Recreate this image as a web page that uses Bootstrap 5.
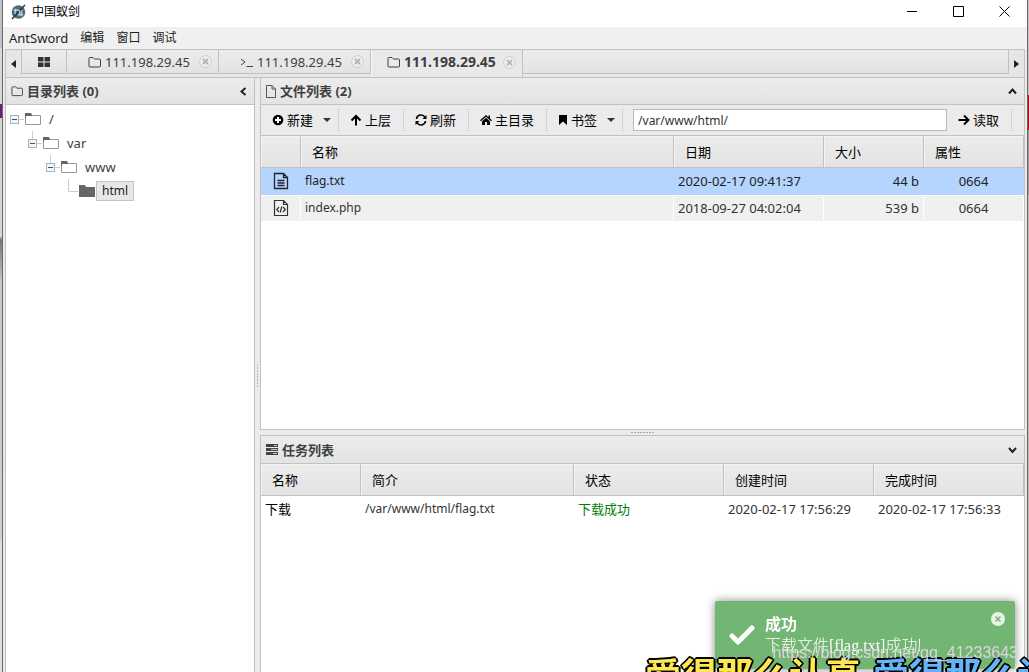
<!DOCTYPE html>
<html lang="zh-CN">
<head>
<meta charset="utf-8">
<meta name="viewport" content="width=device-width, initial-scale=1">
<title>中国蚁剑</title>
<link rel="stylesheet" href="https://cdn.jsdelivr.net/npm/bootstrap@5.3.0/dist/css/bootstrap.min.css">
<style>
:root { --edge: #c1c1c1; --face: linear-gradient(#ececec, #e3e3e3); }
body { font-family: "Noto Sans", "Noto Sans CJK SC", sans-serif; font-size: 13px; line-height: 20px; color: #404040; background: #ebebeb; }
svg { display: block; flex: none; }
button { border: 0; padding: 0; background: none; color: inherit; font: inherit; }
.strip-l { width: 3px; background: linear-gradient(#bfc4c8 0 48px, #d8d8d8 48px 104px, #68216a 104px 118px, #d6d6d6 118px 236px, #777 240px, #c9c9c9 283px, #cfcfcf 540px, #dedede 541px); border-right: 1px solid #686868; }
.strip-r { width: 2px; background: linear-gradient(#c8c4be 0 95px, #b3001b 95px 130px, #9c9690 130px 195px, #c5bdb5 195px); border-left: 1px solid #666; }
.title-row { height: 27px; background: #fff; color: #000; font-size: 12px; padding: 0 0 4px 8px; gap: 6px; }
.win-btns { width: 138px; }
.menu-row { height: 22px; background: #f0f0f0; padding-left: 6px; gap: 12px; font-size: 12px; }
.menu-row a { color: #222; text-decoration: none; }
.menu-row a:first-child { font-size: 13px; }
.shell { padding: 0 2px; }
.tabs-row { height: 29px; border: 1px solid var(--edge); background: #e6e6e6; }
.tabs-row > button { width: 15px; color: #222; }
.tab-list { height: 24px; border: 1px solid var(--edge); border-top: 0; background: var(--face); }
.tab-cell { width: 152px; border-right: 1px solid var(--edge); padding: 0 6px 0 21px; gap: 4px; }
.tab-home { width: 45px; border-right: 1px solid var(--edge); }
.tab-cell.active { height: 27px; background: #e9e9e9; font-size: 14px; font-weight: 700; padding: 0 6px 3px 15px; border-left: 1px solid #f8f8f8; }
.close-dot { margin-left: auto; color: #bbb; }
.tree-pane { width: 250px; background: #fff; border: 1px solid var(--edge); border-top: 0; border-bottom: 0; }
.pane-head { height: 27px; background: var(--face); border-bottom: 1px solid var(--edge); padding: 0 7px 0 5px; gap: 4px; font-weight: 700; }
.pane-head button { margin-left: auto; color: #222; }
.split-v { width: 5px; }
.split-v i { width: 1px; height: 23px; background: repeating-linear-gradient(#bbb 0 2px, transparent 2px 3px); }
.split-h { height: 5px; }
.split-h i { width: 23px; height: 1px; background: repeating-linear-gradient(90deg, #aaa 0 2px, transparent 2px 3px); }
.files-pane { height: 352px; background: #fff; border: 1px solid var(--edge); border-top: 0; }
.tasks-pane { background: #fff; border: 1px solid var(--edge); border-bottom: 0; }
.tasks-pane .pane-head { height: 28px; }
.tree { padding: 2px 4px; margin: 0; }
.tree ul { padding-left: 18px; margin: 0; }
.tree-item { height: 24px; }
.tree-item span { padding: 0 5px; margin-left: 2px; line-height: 18px; border: 1px solid transparent; }
.tree-item .picked { margin-left: 1px; background: #e7e7e7; border-color: #c3c3c3; color: #222; }
.tool-row { height: 31px; background: #ebebeb; border-bottom: 1px solid var(--edge); color: #000; }
.tool-row button { display: flex; align-items: center; gap: 3px; padding: 0 12px 0 11px; height: 22px; border-right: 1px solid #c5d7dc; white-space: nowrap; }
.tool-row .tool-menu { padding-right: 7px; }
.caret-dn { margin-left: 7px; border: 4px solid transparent; border-top-color: #333; border-bottom: 0; }
.path-box { height: 22px; margin: 0 0 0 10px; min-width: 0; padding: 0 4px; border: 1px solid #bbb; border-radius: 0; font: inherit; font-size: 12px; color: #333; }
.file-name { font-size: 12px; }
.grid-tbl { width: 100%; table-layout: fixed; border-collapse: separate; border-spacing: 0; color: #333; }
.grid-tbl th { height: 32px; padding: 0 11px; font-weight: 400; color: #000; background: var(--face); border: 1px solid var(--edge); border-width: 0 1px 1px 0; box-shadow: inset 1px 1px #f4f4f4; }
.grid-tbl td { height: 27px; padding: 0 4px; white-space: nowrap; border-bottom: 1px solid #fff; }
.file-tbl td { border-right: 1px solid #f8f8f8; padding-bottom: 2px; }
.file-tbl tr.alt td { background: #f0f0f0; border-right-color: #fff; height: 26px; }
.file-tbl tr.picked td { background: #b5d5ff; border-right-color: #b5d5ff; color: #222; height: 28px; }
.w-ico { width: 40px; } .w-100c { width: 100px; } .w-150c { width: 150px; }
.ok-text { color: #008000; }
.note { right: 14px; bottom: 3px; width: 300px; height: 68px; background: #73b573; border-radius: 2px; box-shadow: 0 0 10px #888; color: #fff; padding: 11px 10px 0 14px; gap: 10px; line-height: 20px; font-size: 16px; }
.note b { font-family: "Liberation Serif", "Noto Sans CJK SC", serif; }
.note-body { padding-top: 2px; }
.note-msg { font-weight: 300; white-space: nowrap; }
.lyric { left: 645px; top: 650px; right: 0; height: 22px; overflow: hidden; white-space: nowrap; font: 700 36px/46px "Noto Sans CJK SC", sans-serif; gap: 12px; pointer-events: none; text-shadow: 2px 0 #000, -2px 0 #000, 0 2px #000, 0 -2px #000, 1px 1px #000, -1px -1px #000, 1px -1px #000, -1px 1px #000; }
.sung { color: #ffe84d; } .next { color: #63b4fb; }
.stamp { right: 11px; bottom: 9px; font: 16px/20px "Liberation Sans", sans-serif; color: #e3e3e3; opacity: .85; text-shadow: 0 0 1px #999; }
</style>
</head>
<body class="vh-100 overflow-hidden d-flex">
<svg width="0" height="0" class="position-absolute">
  <symbol id="folder-line" viewBox="0 0 13 12"><path d="M1 2.500q0-1 1-1h3l1.500 1.500h5q1 0 1 1v6q0 1-1 1H2q-1 0-1-1z" fill="none" stroke="currentColor"/></symbol>
  <symbol id="folder-open" viewBox="0 0 16 14"><path d="M.5 3.500h15v9H.5z" fill="#fff" stroke="#999"/><path d="M0 1h6l1 2v1H1v2H0z" fill="#666"/></symbol>
  <symbol id="minus-box" viewBox="0 0 9 9"><rect x=".5" y=".5" width="8" height="8" fill="#f0f6fa" stroke="#9fb5c0"/><path d="M2 4.500h5" stroke="#456"/></symbol>
  <symbol id="close-ring" viewBox="0 0 13 13"><circle cx="6.500" cy="6.500" r="5.900" fill="#eee" stroke="#ccc"/><path d="M4 4l5 5M9 4l-5 5" stroke="#b5b5b5" stroke-width="1.800"/></symbol>
</svg>
<div class="strip-l flex-shrink-0"></div>
<div class="flex-grow-1 d-flex flex-column overflow-hidden">
  <header>
    <div class="title-row d-flex align-items-center">
      <svg width="15" height="16" viewBox="0 0 15 16"><circle cx="7.500" cy="8" r="6.800" fill="#4d6a78"/><path d="M1 15L14 1" stroke="#273e49" stroke-width="1.500"/><path d="M4 10q0-5 3-4t1 5M7 11q4 1 4-5M3 7l2-2M10 12l2-2" fill="none" stroke="#c7d8df" stroke-width="1.200"/></svg>
      <span>中国蚁剑</span>
      <div class="win-btns d-flex ms-auto">
        <button class="flex-fill" aria-label="最小化"><svg class="m-auto" width="11" height="11"><path d="M0 5.500h10" stroke="#000"/></svg></button>
        <button class="flex-fill" aria-label="最大化"><svg class="m-auto" width="11" height="11"><path d="M.5.5h10v10H.5z" fill="none" stroke="#000"/></svg></button>
        <button class="flex-fill" aria-label="关闭"><svg class="m-auto" width="11" height="11"><path d="M.5.5l10 10M10.500.5l-10 10" stroke="#000"/></svg></button>
      </div>
    </div>
    <nav class="menu-row d-flex align-items-center"><a href="#">AntSword</a><a href="#">编辑</a><a href="#">窗口</a><a href="#">调试</a></nav>
  </header>
  <div class="shell flex-grow-1 d-flex flex-column overflow-hidden">
    <div class="tabs-row d-flex">
      <button aria-label="向左"><svg class="m-auto" width="5" height="8"><path d="M5 0v8L0 4z" fill="currentColor"/></svg></button>
      <div class="tab-list flex-grow-1 d-flex">
        <button class="tab-home" aria-label="主页"><svg class="m-auto" width="12" height="10" viewBox="0 0 12 10"><path d="M0 0h5.500v4.500H0zM6.500 0H12v4.500H6.500zM0 5.500h5.500V10H0zM6.500 5.500H12V10H6.500z" fill="#333"/></svg></button>
        <button class="tab-cell d-flex align-items-center"><svg width="13" height="12"><use href="#folder-line"/></svg>111.198.29.45<svg class="close-dot" width="13" height="13"><use href="#close-ring"/></svg></button>
        <button class="tab-cell d-flex align-items-center"><svg width="13" height="12"><path d="M1 3l4 3-4 3M6.500 10.500H13" fill="none" stroke="#444"/></svg>111.198.29.45<svg class="close-dot" width="13" height="13"><use href="#close-ring"/></svg></button>
        <button class="tab-cell active d-flex align-items-center"><svg width="13" height="12"><use href="#folder-line"/></svg>111.198.29.45<svg class="close-dot" width="13" height="13"><use href="#close-ring"/></svg></button>
      </div>
      <button aria-label="向右"><svg class="m-auto" width="5" height="8"><path d="M0 0v8l5-4z" fill="currentColor"/></svg></button>
    </div>
    <main class="flex-grow-1 d-flex overflow-hidden">
      <aside class="tree-pane flex-shrink-0">
        <div class="pane-head d-flex align-items-center"><svg width="12" height="12"><use href="#folder-line"/></svg>目录列表 (0)<button aria-label="收起"><svg width="8" height="9"><path d="M6.500 1L2.500 4.500l4 3.500" fill="none" stroke="currentColor" stroke-width="2"/></svg></button></div>
        <ul class="tree list-unstyled">
          <li><div class="tree-item d-flex align-items-center"><svg width="15" height="24"><use href="#minus-box" y="8" width="9" height="9"/><path d="M9 12.500h5" stroke="#ccc"/></svg><svg width="16" height="14"><use href="#folder-open"/></svg><span>/</span></div>
            <ul class="list-unstyled"><li><div class="tree-item d-flex align-items-center"><svg width="15" height="24"><path d="M4.500 0v8M9 12.500h5" stroke="#ccc"/><use href="#minus-box" y="8" width="9" height="9"/></svg><svg width="16" height="14"><use href="#folder-open"/></svg><span>var</span></div>
              <ul class="list-unstyled"><li><div class="tree-item d-flex align-items-center"><svg width="15" height="24"><path d="M4.500 0v8M9 12.500h5" stroke="#ccc"/><use href="#minus-box" y="8" width="9" height="9"/></svg><svg width="16" height="14"><use href="#folder-open"/></svg><span>www</span></div>
                <ul class="list-unstyled"><li><div class="tree-item d-flex align-items-center"><svg width="15" height="24"><path d="M4.500 0v12.500H14" fill="none" stroke="#ccc"/></svg><svg width="16" height="14"><path d="M0 1h6l1 2h9v10H0z" fill="#666"/></svg><span class="picked file-name">html</span></div></li></ul>
              </li></ul>
            </li></ul>
          </li>
        </ul>
      </aside>
      <div class="split-v flex-shrink-0 d-flex align-items-center justify-content-center"><i></i></div>
      <div class="flex-grow-1 d-flex flex-column overflow-hidden">
        <section class="files-pane flex-shrink-0">
          <div class="pane-head d-flex align-items-center"><svg width="10" height="13"><path d="M.5.5h5.500l3.500 3.500v8.500h-9zM6 .5V4h3.500" fill="none" stroke="#555"/></svg>文件列表 (2)<button aria-label="收起"><svg width="9" height="8"><path d="M1 6.500l3.500-4 3.500 4" fill="none" stroke="currentColor" stroke-width="2"/></svg></button></div>
          <div class="tool-row d-flex align-items-center">
            <button class="tool-menu"><svg width="12" height="12"><circle cx="6" cy="6" r="5.300"/><path d="M6 3v6M3 6h6" stroke="#fff" stroke-width="2"/></svg>新建<i class="caret-dn"></i></button>
            <button><svg width="12" height="12"><path d="M6 11.500V2M1.500 6.500L6 2l4.500 4.500" fill="none" stroke="#000" stroke-width="2"/></svg>上层</button>
            <button><svg width="12" height="12"><path d="M1.500 5A4.500 4.500 0 0 1 10 3.500M10.500 7A4.500 4.500 0 0 1 2 8.500" fill="none" stroke="#000" stroke-width="1.600"/><path d="M11.500 1v4h-4zM.5 11V7h4z"/></svg>刷新</button>
            <button><svg width="12" height="12"><path d="M6 1L0 6.300l.8.9L6 2.700l5.200 4.500.8-.9-2-1.800V1.500H8.500v1.700zM6 3.800L2 7.200V11h3V8h2v3h3V7.200z"/></svg>主目录</button>
            <button class="tool-menu"><svg width="10" height="12"><path d="M1 1h8v10L5 7.500 1 11z"/></svg>书签<i class="caret-dn"></i></button>
            <input class="path-box flex-grow-1" type="text" aria-label="路径" value="/var/www/html/">
            <button><svg width="12" height="12"><path d="M.5 6H10M6 1.500L10.500 6 6 10.500" fill="none" stroke="#000" stroke-width="2"/></svg>读取</button>
            <span class="ps-2 pe-1"></span>
          </div>
          <table class="grid-tbl file-tbl">
            <colgroup><col class="w-ico"><col><col class="w-150c"><col class="w-100c"><col class="w-100c"></colgroup>
            <thead><tr><th></th><th>名称</th><th>日期</th><th>大小</th><th>属性</th></tr></thead>
            <tbody>
              <tr class="picked"><td><svg class="m-auto" width="16" height="18"><path d="M1.500 1.500h9l4 4v11h-13zM10.500 1.500v4h4M4.500 8.500h7M4.500 11h7M4.500 13.500h7" fill="none" stroke="#223" stroke-width="1.300"/></svg></td><td class="file-name">flag.txt</td><td>2020-02-17 09:41:37</td><td class="text-end">44 b</td><td class="text-center">0664</td></tr>
              <tr class="alt"><td><svg class="m-auto" width="16" height="18"><path d="M1.500 1.500h9l4 4v11h-13zM10.500 1.500v4h4M6 8L3.700 10.500 6 13M10 8l2.300 2.500L10 13M8.700 7.500l-1.400 6" fill="none" stroke="#333" stroke-width="1.200"/></svg></td><td class="file-name">index.php</td><td>2018-09-27 04:02:04</td><td class="text-end">539 b</td><td class="text-center">0664</td></tr>
            </tbody>
          </table>
        </section>
        <div class="split-h flex-shrink-0 d-flex align-items-center justify-content-center"><i></i></div>
        <section class="tasks-pane flex-grow-1">
          <div class="pane-head d-flex align-items-center"><svg width="12" height="11"><path d="M0 0h12v3H0zM0 4h12v3H0zM0 8h12v3H0z" fill="#444"/><path d="M8 1.500h3M5 5.500h6M7 9.500h4" stroke="#ccc"/></svg>任务列表<button aria-label="展开"><svg width="9" height="8"><path d="M1 2l3.500 4L8 2" fill="none" stroke="currentColor" stroke-width="2"/></svg></button></div>
          <table class="grid-tbl">
            <colgroup><col class="w-100c"><col><col class="w-150c"><col class="w-150c"><col class="w-150c"></colgroup>
            <thead><tr><th>名称</th><th>简介</th><th>状态</th><th>创建时间</th><th>完成时间</th></tr></thead>
            <tbody><tr><td class="text-black">下载</td><td class="file-name">/var/www/html/flag.txt</td><td class="ok-text">下载成功</td><td>2020-02-17 17:56:29</td><td>2020-02-17 17:56:33</td></tr></tbody>
          </table>
        </section>
      </div>
    </main>
  </div>
</div>
<div class="strip-r flex-shrink-0"></div>
<div class="note position-fixed d-flex" role="status">
  <svg class="mt-2" width="26" height="28"><path d="M3 16l6 6L23 8" fill="none" stroke="#fff" stroke-width="5" stroke-linecap="round" stroke-linejoin="round"/></svg>
  <div class="note-body"><b>成功</b><div class="note-msg">下载文件<b>[flag.txt]</b>成功!</div></div>
  <button class="ms-auto align-self-start" aria-label="关闭"><svg width="14" height="14"><circle cx="7" cy="7" r="7" fill="#e8f3e8"/><path d="M4.500 4.500l5 5M9.500 4.500l-5 5" stroke="#73b573" stroke-width="1.500"/></svg></button>
</div>
<div class="lyric position-fixed d-flex"><span class="sung">爱得那么认真</span><span class="next">爱得那么认真</span></div>
<div class="stamp position-fixed">https://blog.csdn.net/qq_41233643</div>
<script src="https://cdn.jsdelivr.net/npm/bootstrap@5.3.0/dist/js/bootstrap.bundle.min.js"></script>
</body>
</html>
